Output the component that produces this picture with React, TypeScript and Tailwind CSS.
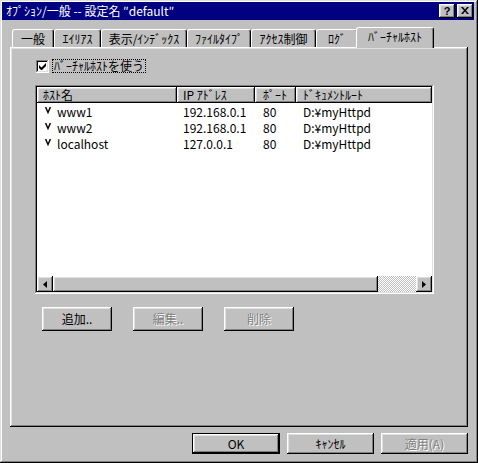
import React from "react";

const raised =
  "shadow-[inset_-1px_-1px_#000,inset_1px_1px_#fff,inset_-2px_-2px_#808080,inset_2px_2px_#dfdfdf]";
const sunken =
  "shadow-[inset_-1px_-1px_#fff,inset_1px_1px_#808080,inset_-2px_-2px_#dfdfdf,inset_2px_2px_#000]";

function Tab({ label, w }: { label: string; w: string }) {
  return (
    <div
      className={`${w} h-[18px] border-t border-l border-white border-r border-r-black rounded-t-[3px] shadow-[inset_-1px_0_#808080] flex items-center justify-center leading-none whitespace-nowrap`}
    >
      {label}
    </div>
  );
}

function Btn({
  label,
  w,
  h,
  disabled,
}: {
  label: string;
  w: string;
  h: string;
  disabled?: boolean;
}) {
  return (
    <div
      className={`${w} ${h} ${raised} flex items-center justify-center leading-none ${
        disabled ? "text-[#808080] [text-shadow:1px_1px_0_#fff]" : "text-black"
      }`}
    >
      {label}
    </div>
  );
}

const rows = [
  { host: "www1", ip: "192.168.0.1" },
  { host: "www2", ip: "192.168.0.1" },
  { host: "localhost", ip: "127.0.0.1" },
];

export default function App() {
  return (
    <div className="w-[478px] h-[463px] bg-[#c0c0c0] shadow-[inset_-1px_-1px_#000,inset_1px_1px_#dfdfdf,inset_-2px_-2px_#808080,inset_2px_2px_#fff] pt-[2px] pl-[2px] pr-[4px] flex flex-col text-[12px] text-black font-['Noto_Sans_CJK_JP',sans-serif] select-none">
      {/* title bar */}
      <div className="h-[18px] bg-[#000080] flex items-center justify-between pl-[4px] pr-[1px]">
        <span className="text-white leading-none whitespace-nowrap">
          ｵﾌﾟｼｮﾝ/一般 -- 設定名 ″default″
        </span>
        <div className="flex gap-[2px]">
          <div
            className={`w-[16px] h-[14px] bg-[#c0c0c0] ${raised} flex items-center justify-center font-['Liberation_Sans',sans-serif] font-bold text-[11px] leading-none text-black`}
          >
            ?
          </div>
          <div className={`w-[16px] h-[14px] bg-[#c0c0c0] ${raised} flex items-center justify-center pb-[1px]`}>
            <svg width="8" height="7" viewBox="0 0 8 7">
              <path d="M0 0h2l2 2.5L6 0h2L5 3.5 8 7H6L4 4.5 2 7H0l3-3.5z" fill="#000" />
            </svg>
          </div>
        </div>
      </div>

      {/* body */}
      <div className="flex flex-col pl-[8px] pr-[6px] mt-[7px]">
        {/* tabs */}
        <div className="flex items-end h-[20px] pl-[2px]">
          <Tab label="一般" w="w-[42px]" />
          <Tab label="ｴｲﾘｱｽ" w="w-[47px]" />
          <Tab label="表示/ｲﾝﾃﾞｯｸｽ" w="w-[86px]" />
          <Tab label="ﾌｧｲﾙﾀｲﾌﾟ" w="w-[64px]" />
          <Tab label="ｱｸｾｽ制御" w="w-[65px]" />
          <Tab label="ﾛｸﾞ" w="w-[42px]" />
          <div className="relative z-10 -mx-[2px] -mb-[1px] w-[78px] h-[21px] bg-[#c0c0c0] border-t border-l border-white border-r border-r-black rounded-t-[3px] shadow-[inset_-1px_0_#808080] flex items-center justify-center leading-none pb-[2px] whitespace-nowrap">
            ﾊﾞｰﾁｬﾙﾎｽﾄ
          </div>
        </div>

        {/* panel */}
        <div className={`h-[380px] ${raised} pt-[12px] pl-[25px] flex flex-col`}>
          {/* checkbox */}
          <div className="ml-[1px] h-[14px] flex items-center">
            <div className={`w-[13px] h-[13px] bg-white ${sunken} flex items-center justify-center`}>
              <svg width="7" height="7" viewBox="0 0 7 7">
                <path d="M0 2v3l2 2h1l4-4V0L2.5 4.5z" fill="#000" />
              </svg>
            </div>
            <div className="ml-[3px] h-[14px] border border-dotted border-black px-[1px] flex items-center leading-none whitespace-nowrap">
              ﾊﾞｰﾁｬﾙﾎｽﾄを使う
            </div>
          </div>

          {/* list view */}
          <div className={`mt-[12px] w-[399px] h-[209px] bg-white ${sunken} p-[2px] flex flex-col`}>
            <div className="flex h-[16px] bg-[#c0c0c0] leading-none whitespace-nowrap">
              <div className={`w-[140px] ${raised} flex items-center pl-[6px]`}>ﾎｽﾄ名</div>
              <div className={`w-[78px] ${raised} flex items-center pl-[6px]`}>IP ｱﾄﾞﾚｽ</div>
              <div className={`w-[41px] ${raised} flex items-center pl-[8px]`}>ﾎﾟｰﾄ</div>
              <div className={`flex-1 ${raised} flex items-center pl-[7px]`}>ﾄﾞｷｭﾒﾝﾄﾙｰﾄ</div>
            </div>
            <div className="flex-1 pt-[1px] flex flex-col">
              {rows.map((r) => (
                <div key={r.host} className="h-[16px] flex items-center leading-none whitespace-nowrap">
                  <div className="w-[140px] flex items-center pl-[8px]">
                    <svg width="6" height="16" viewBox="0 0 6 16" className="shrink-0">
                      <path d="M0.6 3 L3 8.5 L5.4 3" fill="none" stroke="#000" strokeWidth="1.4" />
                    </svg>
                    <span className="ml-[6px]">{r.host}</span>
                  </div>
                  <div className="w-[78px] pl-[6px]">{r.ip}</div>
                  <div className="w-[41px] pl-[8px]">80</div>
                  <div className="flex-1 pl-[7px]">D:¥myHttpd</div>
                </div>
              ))}
            </div>
            {/* horizontal scrollbar */}
            <div className="h-[16px] flex">
              <div className={`w-[16px] h-[16px] bg-[#c0c0c0] ${raised} flex items-center justify-center`}>
                <svg width="4" height="7" viewBox="0 0 4 7">
                  <path d="M4 0v7L0 3.5z" fill="#000" />
                </svg>
              </div>
              <div className={`w-[325px] h-[16px] bg-[#c0c0c0] ${raised}`} />
              <div className="flex-1 h-[16px] bg-[repeating-conic-gradient(#c0c0c0_0%_25%,#ffffff_0%_50%)] bg-[length:2px_2px]" />
              <div className={`w-[16px] h-[16px] bg-[#c0c0c0] ${raised} flex items-center justify-center`}>
                <svg width="4" height="7" viewBox="0 0 4 7">
                  <path d="M0 0v7L4 3.5z" fill="#000" />
                </svg>
              </div>
            </div>
          </div>

          {/* buttons */}
          <div className="mt-[13px] ml-[7px] flex gap-[21px]">
            <Btn label="追加.." w="w-[70px]" h="h-[24px]" />
            <Btn label="編集.." w="w-[70px]" h="h-[24px]" disabled />
            <Btn label="削除" w="w-[70px]" h="h-[24px]" disabled />
          </div>
        </div>

        {/* bottom buttons */}
        <div className="mt-[6px] flex justify-end gap-[7px]">
          <div className="w-[88px] h-[21px] border border-black flex">
            <div className={`flex-1 ${raised} flex items-center justify-center leading-none`}>OK</div>
          </div>
          <Btn label="ｷｬﾝｾﾙ" w="w-[87px]" h="h-[21px]" />
          <Btn label="適用(A)" w="w-[87px]" h="h-[21px]" disabled />
        </div>
      </div>
    </div>
  );
}
